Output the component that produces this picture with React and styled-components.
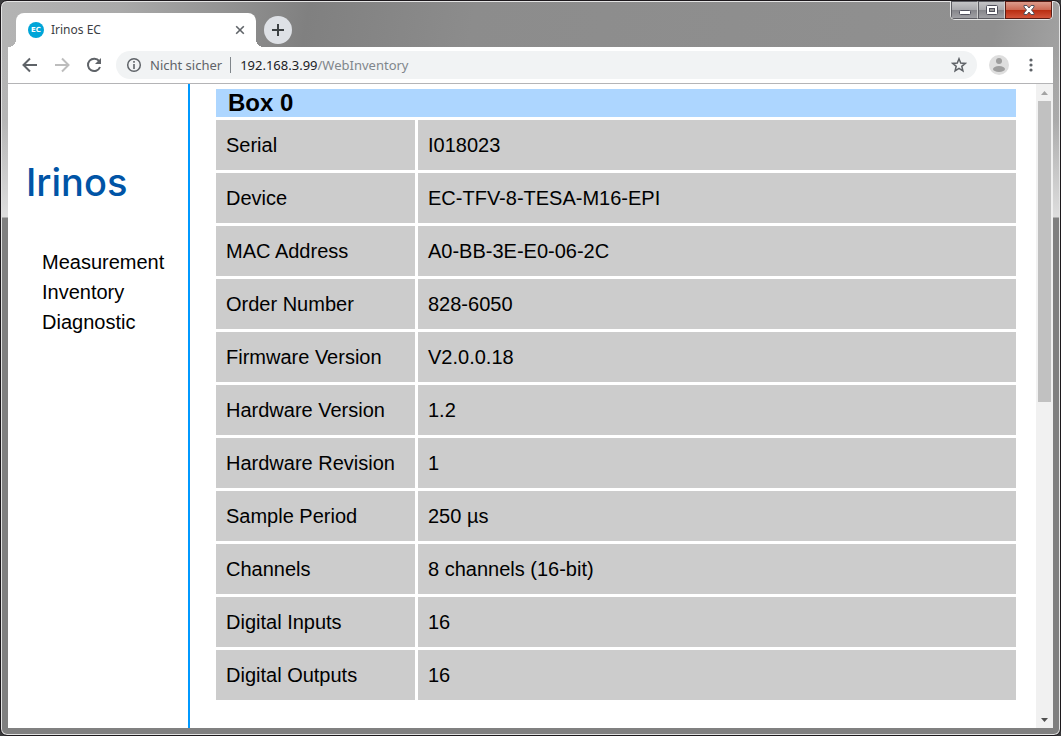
import styled, { createGlobalStyle, css } from 'styled-components';

const GlobalStyle = createGlobalStyle`
    * {
        box-sizing: border-box;
    }

    body {
        margin: 0;
        background: #3a3a3c;
    }

    button {
        padding: 0;
        border: none;
        background: none;
        font: inherit;
        color: inherit;
        cursor: pointer;
    }
`;

const Window = styled.div`
    height: 100vh;
    display: flex;
    flex-direction: column;
    padding: 0 7px 7px;
    border: 1px solid #1c181c;
    border-radius: 7px;
    box-shadow: inset 0 0 0 1px #e4e4e4;
    background:
        linear-gradient(to bottom, transparent 46px, rgba(200, 200, 200, 0.2) 120px, #dedede 216px, #808080 217px),
        linear-gradient(100deg, #b4b4b4 0%, #aaaaaa 10%, #808080 26%, #8c8c8c 40%, #909090 84%, #a8a8a8 92%, #b8b8b8 100%);
    overflow: hidden;
`;

const TitleBar = styled.header`
    display: flex;
    justify-content: space-between;
    align-items: flex-end;
    height: 46px;
    flex-shrink: 0;
    padding-left: 8px;
`;

const TabStrip = styled.div`
    display: flex;
    align-items: flex-end;
    gap: 8px;
`;

const Tab = styled.div`
    position: relative;
    display: flex;
    align-items: center;
    width: 240px;
    height: 34px;
    padding: 0 10px 0 12px;
    gap: 7px;
    background: #fff;
    border-radius: 8px 8px 0 0;
    font: 12px/18px 'Noto Sans', 'Open Sans', sans-serif;
    color: #3c4043;

    /* curved feet of the active tab */
    &::before,
    &::after {
        content: '';
        position: absolute;
        bottom: 0;
        width: 8px;
        height: 8px;
    }

    &::before {
        right: 100%;
        background: radial-gradient(circle at 0 0, transparent 8px, #fff 8px);
    }

    &::after {
        left: 100%;
        background: radial-gradient(circle at 100% 0, transparent 8px, #fff 8px);
    }
`;

const TabTitle = styled.span`
    flex: 1;
`;

const Favicon = styled.span`
    width: 16px;
    height: 16px;
    border-radius: 50%;
    background: #00a5d8;
    color: #fff;
    font: bold 7px/16px 'DejaVu Sans', sans-serif;
    text-align: center;
`;

const TabClose = styled.button`
    display: flex;
    width: 12px;
    height: 12px;
`;

const NewTab = styled.button`
    display: flex;
    align-items: center;
    justify-content: center;
    width: 28px;
    height: 28px;
    margin-bottom: 3px;
    border-radius: 50%;
    background: #dee1e6;
`;

const WindowControls = styled.div`
    display: flex;
    align-self: flex-start;
    height: 19px;
    border: 1px solid #e6e6e6;
    border-top: none;
    border-radius: 0 0 5px 5px;
    overflow: hidden;
`;

const ControlButton = styled.button`
    display: flex;
    align-items: center;
    justify-content: center;
    width: 27px;
    border: 1px solid #5c5c62;
    border-right-color: #d0d0d0;
    background: linear-gradient(#c4c4c6, #a8a8ac 48%, #85858a 50%, #a0a0a4);

    ${({ $danger }) =>
        $danger &&
        css`
            width: 47px;
            border-color: #5a1c14;
            background: linear-gradient(#dc9c8c, #cc6a54 48%, #b82c10 50%, #d2543a);
        `}
`;

const Toolbar = styled.div`
    display: flex;
    align-items: center;
    height: 37px;
    flex-shrink: 0;
    padding: 0 12px;
    background: #fff;
    border-bottom: 1px solid #b4b4b6;
`;

const ToolButton = styled.button`
    display: flex;
    align-items: center;
    justify-content: center;
    width: 20px;
    height: 20px;
    margin-right: 12px;
`;

const AddressBar = styled.div`
    display: flex;
    align-items: center;
    flex: 1;
    height: 28px;
    padding: 0 8px;
    border-radius: 14px;
    background: #f1f3f4;
    font: 13px/20px 'Noto Sans', 'Open Sans', sans-serif;
    color: #80868b;
`;

const Security = styled.button`
    display: flex;
    align-items: center;
    gap: 6px;
    padding-right: 8px;
    border-right: 1px solid #80868b;
    line-height: 16px;
    color: #5f6368;
`;

const Url = styled.div`
    flex: 1;
    padding-left: 9px;

    b {
        font-weight: normal;
        color: #202124;
    }
`;

const ProfileButton = styled.button`
    display: flex;
    margin: 0 12px;
`;

const MenuButton = styled.button`
    display: flex;
    width: 20px;
    justify-content: center;
`;

const Page = styled.div`
    display: flex;
    flex: 1;
    min-height: 0;
    background: #fff;
    font: 20px/30px 'Liberation Sans', Arial, sans-serif;
    color: #000;
`;

const Sidebar = styled.aside`
    width: 182px;
    flex-shrink: 0;
    padding: 76px 0 0 18px;
    border-right: 2px solid #0099ff;
`;

const Brand = styled.div`
    font: 500 38px/44px Inter, 'Liberation Sans', sans-serif;
    color: #0054a6;
`;

const Nav = styled.nav`
    display: flex;
    flex-direction: column;
    padding: 43px 0 0 16px;

    a {
        color: #000;
        text-decoration: none;
    }
`;

const Content = styled.main`
    flex: 1;
    padding: 2px 17px 0 23px;
    overflow: hidden;
`;

const InventoryTable = styled.table`
    width: 100%;
    border-spacing: 3px;
    text-align: left;
`;

const BoxTitle = styled.th`
    height: 28px;
    padding: 0 12px;
    background: #add6ff;
    font-size: 24px;
    line-height: 28px;
`;

const Label = styled.th`
    width: 199px;
    height: 50px;
    padding: 0 10px;
    background: #ccc;
    font-weight: normal;
`;

const Value = styled.td`
    padding: 0 10px;
    background: #ccc;
`;

const Scrollbar = styled.div`
    display: flex;
    flex-direction: column;
    width: 17px;
    flex-shrink: 0;
    padding: 0 2px;
    background: #f1f1f1;
`;

const ScrollArrow = styled.button`
    display: flex;
    align-items: center;
    justify-content: center;
    height: 17px;
`;

const ScrollTrack = styled.div`
    flex: 1;
`;

const ScrollThumb = styled.div`
    height: calc(100% * 301 / 610);
    background: #c1c1c1;
`;

const rows = [
    ['Serial', 'I018023'],
    ['Device', 'EC-TFV-8-TESA-M16-EPI'],
    ['MAC Address', 'A0-BB-3E-E0-06-2C'],
    ['Order Number', '828-6050'],
    ['Firmware Version', 'V2.0.0.18'],
    ['Hardware Version', '1.2'],
    ['Hardware Revision', '1'],
    ['Sample Period', '250 µs'],
    ['Channels', '8 channels (16-bit)'],
    ['Digital Inputs', '16'],
    ['Digital Outputs', '16'],
];

const BackIcon = () => (
    <svg width="20" height="20" viewBox="0 0 20 20" fill="none" stroke="#5f6368" strokeWidth="2">
        <path d="M17 10H4M10 3.5L3.5 10L10 16.5" />
    </svg>
);

const ForwardIcon = () => (
    <svg width="20" height="20" viewBox="0 0 20 20" fill="none" stroke="#bdbdbd" strokeWidth="2">
        <path d="M3 10H16M10 3.5L16.5 10L10 16.5" />
    </svg>
);

const ReloadIcon = () => (
    <svg width="20" height="20" viewBox="0 0 20 20">
        <path d="M15.2 6.2A6.2 6.2 0 1 0 16 12" fill="none" stroke="#5f6368" strokeWidth="2" />
        <path d="M17 3V9H11Z" fill="#5f6368" />
    </svg>
);

const BrowserTabs = () => (
    <TabStrip>
        <Tab>
            <Favicon>EC</Favicon>
            <TabTitle>Irinos EC</TabTitle>
            <TabClose aria-label="Tab schließen">
                <svg width="12" height="12" viewBox="0 0 12 12" stroke="#5f6368" strokeWidth="1.6">
                    <path d="M2.2 2.2L9.8 9.8M9.8 2.2L2.2 9.8" />
                </svg>
            </TabClose>
        </Tab>
        <NewTab aria-label="Neuer Tab">
            <svg width="12" height="12" viewBox="0 0 12 12" stroke="#3c4043" strokeWidth="2">
                <path d="M6 0V12M0 6H12" />
            </svg>
        </NewTab>
    </TabStrip>
);

const Controls = () => (
    <WindowControls>
        <ControlButton aria-label="Minimieren">
            <svg width="14" height="12" viewBox="0 0 14 12">
                <rect x="1.5" y="6.5" width="11" height="4" rx="1" fill="#fff" stroke="#50505c" />
            </svg>
        </ControlButton>
        <ControlButton aria-label="Maximieren">
            <svg width="12" height="10" viewBox="0 0 12 10">
                <rect x=".5" y=".5" width="11" height="9" rx="1" fill="#fff" stroke="#50505c" />
                <rect x="3.5" y="3.5" width="5" height="3" fill="#999" stroke="#50505c" />
            </svg>
        </ControlButton>
        <ControlButton $danger aria-label="Schließen">
            <svg width="12" height="10" viewBox="0 0 12 10">
                <path
                    d="M1 .5H4L6 3L8 .5H11V2L8.5 5L11 8V9.5H8L6 7L4 9.5H1V8L3.5 5L1 2Z"
                    fill="#fff"
                    stroke="#50505c"
                />
            </svg>
        </ControlButton>
    </WindowControls>
);

const BrowserToolbar = () => (
    <Toolbar>
        <ToolButton aria-label="Zurück">
            <BackIcon />
        </ToolButton>
        <ToolButton aria-label="Vorwärts">
            <ForwardIcon />
        </ToolButton>
        <ToolButton aria-label="Neu laden">
            <ReloadIcon />
        </ToolButton>
        <AddressBar>
            <Security>
                <svg width="20" height="16" viewBox="0 0 20 16">
                    <circle cx="10" cy="8" r="6.3" fill="none" stroke="#5f6368" strokeWidth="1.5" />
                    <path d="M10 7V12M10 4V5.7" stroke="#5f6368" strokeWidth="1.6" />
                </svg>
                Nicht sicher
            </Security>
            <Url>
                <b>192.168.3.99</b>/WebInventory
            </Url>
            <svg width="20" height="20" viewBox="0 0 20 20" fill="none" stroke="#5f6368" strokeWidth="1.5">
                <path d="M10 3.8L11.7 8.1L16.3 8.4L12.8 11.3L13.9 15.8L10 13.3L6.1 15.8L7.2 11.3L3.7 8.4L8.3 8.1Z" />
            </svg>
        </AddressBar>
        <ProfileButton aria-label="Profil">
            <svg width="20" height="20" viewBox="0 0 20 20">
                <circle cx="10" cy="10" r="10" fill="#dedede" />
                <circle cx="10" cy="6" r="3" fill="#9e9e9e" />
                <ellipse cx="10" cy="14" rx="6" ry="3" fill="#9e9e9e" />
            </svg>
        </ProfileButton>
        <MenuButton aria-label="Menü">
            <svg width="4" height="14" viewBox="0 0 4 14" fill="#5f6368">
                <circle cx="2" cy="2" r="1.6" />
                <circle cx="2" cy="7" r="1.6" />
                <circle cx="2" cy="12" r="1.6" />
            </svg>
        </MenuButton>
    </Toolbar>
);

const App = () => {
    return (
        <>
            <GlobalStyle />
            <Window>
                <TitleBar>
                    <BrowserTabs />
                    <Controls />
                </TitleBar>
                <BrowserToolbar />
                <Page>
                    <Sidebar>
                        <Brand>Irinos</Brand>
                        <Nav>
                            <a href="#measurement">Measurement</a>
                            <a href="#inventory">Inventory</a>
                            <a href="#diagnostic">Diagnostic</a>
                        </Nav>
                    </Sidebar>
                    <Content>
                        <InventoryTable>
                            <thead>
                                <tr>
                                    <BoxTitle colSpan={2}>Box 0</BoxTitle>
                                </tr>
                            </thead>
                            <tbody>
                                {rows.map(([label, value]) => (
                                    <tr key={label}>
                                        <Label scope="row">{label}</Label>
                                        <Value>{value}</Value>
                                    </tr>
                                ))}
                            </tbody>
                        </InventoryTable>
                    </Content>
                    <Scrollbar>
                        <ScrollArrow aria-label="Nach oben">
                            <svg width="7" height="4" viewBox="0 0 7 4">
                                <path d="M0 4L3.5 0L7 4Z" fill="#a3a3a3" />
                            </svg>
                        </ScrollArrow>
                        <ScrollTrack>
                            <ScrollThumb />
                        </ScrollTrack>
                        <ScrollArrow aria-label="Nach unten">
                            <svg width="7" height="4" viewBox="0 0 7 4">
                                <path d="M0 0L3.5 4L7 0Z" fill="#505050" />
                            </svg>
                        </ScrollArrow>
                    </Scrollbar>
                </Page>
            </Window>
        </>
    );
};

export default App;
